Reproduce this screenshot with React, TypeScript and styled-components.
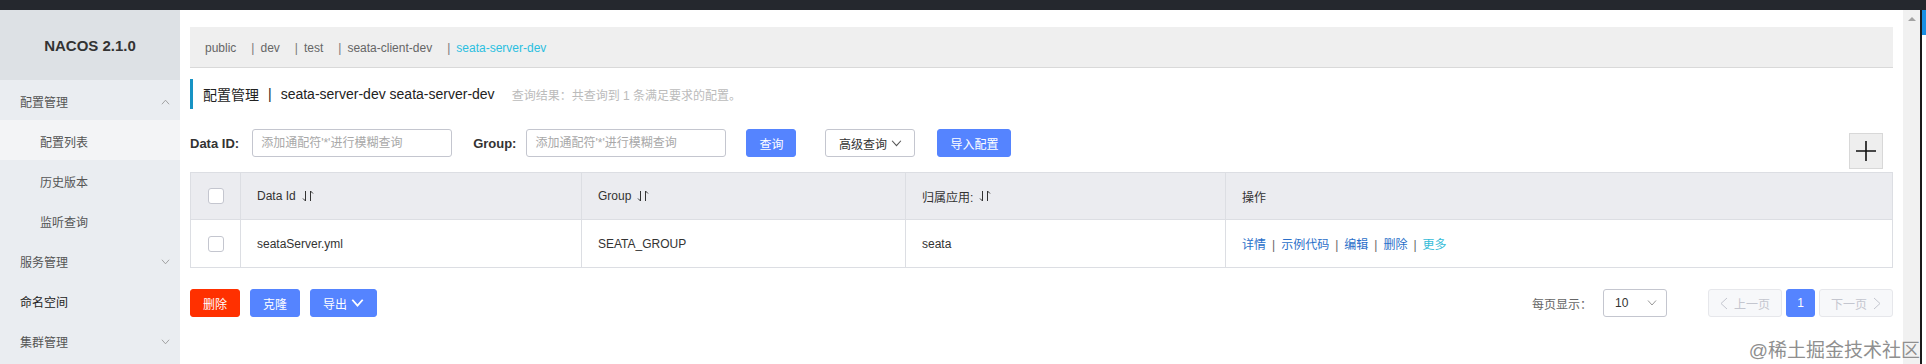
import styled, { createGlobalStyle } from 'styled-components';

const GlobalStyle = createGlobalStyle`
  html, body {
    margin: 0;
    padding: 0;
    background: #fff;
  }
  body {
    font-family: "Liberation Sans", "Noto Sans CJK SC", sans-serif;
    font-size: 12px;
    color: #333;
  }
  * {
    box-sizing: border-box;
  }
`;

const Page = styled.div`
  position: relative;
  width: 1926px;
  height: 364px;
  overflow: hidden;
  display: flex;
  flex-direction: column;
`;

const TopStrip = styled.div`
  flex: none;
  height: 10px;
  background: #25282e;
`;

const Frame = styled.div`
  flex: 1;
  min-height: 0;
  display: flex;
`;

/* ---------- sidebar ---------- */

const Sidebar = styled.aside`
  flex: none;
  width: 180px;
  background: #eaedf1;
`;

const Logo = styled.div`
  height: 70px;
  display: flex;
  align-items: center;
  justify-content: center;
  background: #dde1e5;
  font-size: 15px;
  font-weight: bold;
  color: #333;
`;

const MenuItem = styled.div<{ $sub?: boolean; $active?: boolean; $dark?: boolean }>`
  height: 40px;
  display: flex;
  align-items: center;
  padding: 3px 10px 0 ${(p) => (p.$sub ? 40 : 20)}px;
  background: ${(p) => (p.$active ? '#f3f4f6' : 'transparent')};
  color: ${(p) => (p.$dark ? '#222' : '#555')};
  font-size: 12px;
`;

const MenuChevron = styled.svg`
  margin-left: auto;
  width: 9px;
  height: 6px;
`;

/* ---------- main ---------- */

const Main = styled.main`
  flex: 1;
  min-width: 0;
  padding: 17px 10px 0;
  background: #fff;
`;

const NamespaceBar = styled.div`
  height: 41px;
  display: flex;
  align-items: center;
  padding: 2px 0 0 15px;
  background: #efefef;
  border-bottom: 1px solid #d9d9d9;
  font-size: 12px;
  color: #666;
`;

const NsItem = styled.span<{ $current?: boolean; $first?: boolean }>`
  margin-left: ${(p) => (p.$first ? 0 : 15)}px;
  color: ${(p) => (p.$current ? '#2bbfe0' : '#666')};
`;

const NsSep = styled.span`
  margin-right: 6px;
  color: #777;
`;

const TitleRow = styled.div`
  margin-top: 11px;
  height: 30px;
  display: flex;
  align-items: center;
  padding-left: 10px;
  border-left: 3px solid #1793c4;
  font-size: 14px;
  color: #222;
  white-space: pre;
`;

const TitleSep = styled.span`
  margin: 0 9px;
`;

const Hint = styled.span`
  margin-left: 17px;
  font-size: 12px;
  color: #bbb;
`;

const SearchRow = styled.div`
  margin-top: 20px;
  display: flex;
  align-items: flex-start;
`;

const Field = styled.label<{ $ml?: number }>`
  display: flex;
  align-items: center;
  height: 28px;
  margin-left: ${(p) => p.$ml ?? 0}px;
`;

const FieldLabel = styled.span<{ $gap: number }>`
  margin-right: ${(p) => p.$gap}px;
  font-size: 13px;
  font-weight: bold;
  color: #333;
`;

const TextInput = styled.input`
  width: 200px;
  height: 28px;
  padding: 0 8px;
  border: 1px solid #c4c6cf;
  border-radius: 3px;
  font: inherit;
  font-size: 12px;
  color: #333;
  outline: none;
  &::placeholder {
    color: #a8a8a8;
  }
`;

const Button = styled.button<{ $variant?: 'primary' | 'normal' | 'danger'; $ml?: number; $w?: number }>`
  display: inline-flex;
  align-items: center;
  justify-content: center;
  gap: 4px;
  height: 28px;
  ${(p) => (p.$w ? `width: ${p.$w}px;` : 'padding: 0 12px;')}
  margin-left: ${(p) => p.$ml ?? 0}px;
  border-radius: 3px;
  font: inherit;
  font-size: 12px;
  cursor: pointer;
  border: 1px solid
    ${(p) => (p.$variant === 'danger' ? '#ff3000' : p.$variant === 'normal' ? '#c4c6cf' : '#5584ff')};
  background: ${(p) => (p.$variant === 'danger' ? '#ff3000' : p.$variant === 'normal' ? '#fff' : '#5584ff')};
  color: ${(p) => (p.$variant === 'normal' ? '#333' : '#fff')};
`;

const AddButton = styled.button`
  margin: 4px 10px 0 auto;
  width: 34px;
  height: 36px;
  padding: 0;
  display: flex;
  align-items: center;
  justify-content: center;
  background: #eee;
  border: 1px solid #d8d8d8;
`;

const Table = styled.table`
  margin-top: 3px;
  width: 100%;
  table-layout: fixed;
  border-collapse: collapse;
  font-size: 12px;
  color: #333;
`;

const Col = styled.col<{ $w?: number }>`
  ${(p) => (p.$w ? `width: ${p.$w}px;` : '')}
`;

const Th = styled.th`
  height: 47px;
  padding: 0 16px;
  text-align: left;
  font-weight: normal;
  background: #ebecf0;
  border: 1px solid #dcdee3;
`;

const Td = styled.td`
  height: 48px;
  padding: 0 16px;
  border: 1px solid #dcdee3;
  border-top: none;
`;

const CheckCell = styled.div`
  width: 16px;
  height: 16px;
  margin: 0 auto;
  background: #fff;
  border: 1px solid #c4c6cf;
  border-radius: 3px;
`;

const HeadLabel = styled.span`
  display: inline-flex;
  align-items: center;
  gap: 6px;
`;

const ActionLink = styled.span<{ $more?: boolean }>`
  color: ${(p) => (p.$more ? '#35bcd8' : '#2a6fc9')};
`;

const ActionSep = styled.span`
  margin: 0 6px;
  color: #666;
`;

const Footer = styled.div`
  margin-top: 21px;
  display: flex;
  justify-content: space-between;
  align-items: center;
`;

const ButtonGroup = styled.div`
  display: flex;
  gap: 10px;
`;

const Pager = styled.div`
  display: flex;
  align-items: center;
`;

const PagerLabel = styled.span`
  margin-right: 11px;
  color: #666;
`;

const PageSize = styled.div`
  width: 64px;
  height: 28px;
  display: flex;
  align-items: center;
  justify-content: space-between;
  padding: 0 9px 0 11px;
  border: 1px solid #c4c6cf;
  border-radius: 3px;
  color: #333;
  margin-right: 41px;
`;

const PageButton = styled.div<{ $current?: boolean; $w: number; $ml?: number }>`
  width: ${(p) => p.$w}px;
  height: 28px;
  margin-left: ${(p) => p.$ml ?? 0}px;
  display: flex;
  align-items: center;
  justify-content: center;
  gap: 6px;
  border-radius: 3px;
  border: 1px solid ${(p) => (p.$current ? '#5584ff' : '#e6e7eb')};
  background: ${(p) => (p.$current ? '#5584ff' : '#f7f8fa')};
  color: ${(p) => (p.$current ? '#fff' : '#c4c6cf')};
`;

/* ---------- window edge ---------- */

const ScrollTrack = styled.div`
  flex: none;
  width: 17px;
  background: #f1f1f1;
  display: flex;
  justify-content: center;
`;

const ScrollArrow = styled.div`
  margin-top: 7px;
  width: 0;
  height: 0;
  border-left: 4px solid transparent;
  border-right: 4px solid transparent;
  border-bottom: 4px solid #a3a3a3;
`;

const EdgeLine = styled.div`
  flex: none;
  width: 2px;
  background: #1b1b1b;
`;

const EdgePanel = styled.div`
  flex: none;
  width: 4px;
  background: #fff;
  &::before {
    content: '';
    display: block;
    height: 25px;
    background: #1a8fe3;
  }
`;

const Watermark = styled.div`
  position: absolute;
  right: 6px;
  top: 335px;
  font-size: 19px;
  color: #8f8f8f;
  text-shadow: 0 0 1px #fff;
  white-space: nowrap;
`;

/* ---------- icons ---------- */

const Chevron = ({ up, color = '#999', w = 9, h = 6, sw = 1 }: { up?: boolean; color?: string; w?: number; h?: number; sw?: number }) => (
  <svg width={w} height={h} viewBox="0 0 10 6">
    <path d={up ? 'M1 5.5 L5 1 L9 5.5' : 'M1 0.5 L5 5 L9 0.5'} fill="none" stroke={color} strokeWidth={sw} />
  </svg>
);

const SideChevron = ({ up }: { up?: boolean }) => (
  <MenuChevron viewBox="0 0 10 6">
    <path d={up ? 'M1 5.5 L5 1 L9 5.5' : 'M1 0.5 L5 5 L9 0.5'} fill="none" stroke="#9a9a9a" strokeWidth="1" />
  </MenuChevron>
);

const SortIcon = () => (
  <svg width="12" height="12" viewBox="0 0 12 12">
    <path d="M3.5 1 V11 L1 8.5" fill="none" stroke="#333" strokeWidth="1" />
    <path d="M8.5 11 V1 L11 3.5" fill="none" stroke="#333" strokeWidth="1" />
  </svg>
);

const SideArrow = ({ right }: { right?: boolean }) => (
  <svg width="8" height="13" viewBox="0 0 8 13">
    <path d={right ? 'M1 1 L7 6.5 L1 12' : 'M7 1 L1 6.5 L7 12'} fill="none" stroke="#c4c6cf" strokeWidth="1" />
  </svg>
);

const namespaces = ['public', 'dev', 'test', 'seata-client-dev', 'seata-server-dev'];

const menu = [
  { label: '配置管理', chevron: 'up' },
  { label: '配置列表', sub: true, active: true },
  { label: '历史版本', sub: true },
  { label: '监听查询', sub: true },
  { label: '服务管理', chevron: 'down' },
  { label: '命名空间', dark: true },
  { label: '集群管理', chevron: 'down' },
];

const actions = ['详情', '示例代码', '编辑', '删除', '更多'];

export default function App() {
  return (
    <Page>
      <GlobalStyle />
      <TopStrip />
      <Frame>
        <Sidebar>
          <Logo>NACOS 2.1.0</Logo>
          {menu.map((m) => (
            <MenuItem key={m.label} $sub={m.sub} $active={m.active} $dark={m.dark}>
              {m.label}
              {m.chevron && <SideChevron up={m.chevron === 'up'} />}
            </MenuItem>
          ))}
        </Sidebar>

        <Main>
          <NamespaceBar>
            {namespaces.map((ns, i) => (
              <NsItem key={ns} $first={i === 0} $current={i === namespaces.length - 1}>
                {i > 0 && <NsSep>|</NsSep>}
                {ns}
              </NsItem>
            ))}
          </NamespaceBar>

          <TitleRow>
            配置管理
            <TitleSep>|</TitleSep>
            seata-server-dev seata-server-dev
            <Hint>查询结果：共查询到 1 条满足要求的配置。</Hint>
          </TitleRow>

          <SearchRow>
            <Field>
              <FieldLabel $gap={13}>Data ID:</FieldLabel>
              <TextInput placeholder="添加通配符'*'进行模糊查询" />
            </Field>
            <Field $ml={21}>
              <FieldLabel $gap={10}>Group:</FieldLabel>
              <TextInput placeholder="添加通配符'*'进行模糊查询" />
            </Field>
            <Button $ml={20}>查询</Button>
            <Button $variant="normal" $ml={29} $w={90}>
              高级查询
              <Chevron color="#555" w={11} h={7} />
            </Button>
            <Button $ml={22}>导入配置</Button>
            <AddButton>
              <svg width="22" height="22" viewBox="0 0 22 22">
                <path d="M1 11 H21 M11 1 V21" stroke="#111" strokeWidth="1.6" />
              </svg>
            </AddButton>
          </SearchRow>

          <Table>
            <colgroup>
              <Col $w={50} />
              <Col $w={341} />
              <Col $w={324} />
              <Col $w={320} />
              <Col />
            </colgroup>
            <thead>
              <tr>
                <Th>
                  <CheckCell />
                </Th>
                <Th>
                  <HeadLabel>
                    Data Id <SortIcon />
                  </HeadLabel>
                </Th>
                <Th>
                  <HeadLabel>
                    Group <SortIcon />
                  </HeadLabel>
                </Th>
                <Th>
                  <HeadLabel>
                    归属应用: <SortIcon />
                  </HeadLabel>
                </Th>
                <Th>操作</Th>
              </tr>
            </thead>
            <tbody>
              <tr>
                <Td>
                  <CheckCell />
                </Td>
                <Td>seataServer.yml</Td>
                <Td>SEATA_GROUP</Td>
                <Td>seata</Td>
                <Td>
                  {actions.map((a, i) => (
                    <span key={a}>
                      {i > 0 && <ActionSep>|</ActionSep>}
                      <ActionLink $more={a === '更多'}>{a}</ActionLink>
                    </span>
                  ))}
                </Td>
              </tr>
            </tbody>
          </Table>

          <Footer>
            <ButtonGroup>
              <Button $variant="danger">删除</Button>
              <Button>克隆</Button>
              <Button>
                导出
                <Chevron color="#fff" w={13} h={8} sw={1.4} />
              </Button>
            </ButtonGroup>
            <Pager>
              <PagerLabel>每页显示：</PagerLabel>
              <PageSize>
                10
                <Chevron color="#999" w={10} h={6} />
              </PageSize>
              <PageButton $w={74}>
                <SideArrow />
                上一页
              </PageButton>
              <PageButton $w={29} $ml={4} $current>
                1
              </PageButton>
              <PageButton $w={74} $ml={4}>
                下一页
                <SideArrow right />
              </PageButton>
            </Pager>
          </Footer>
        </Main>

        <ScrollTrack>
          <ScrollArrow />
        </ScrollTrack>
        <EdgeLine />
        <EdgePanel />
      </Frame>
      <Watermark>@稀土掘金技术社区</Watermark>
    </Page>
  );
}
